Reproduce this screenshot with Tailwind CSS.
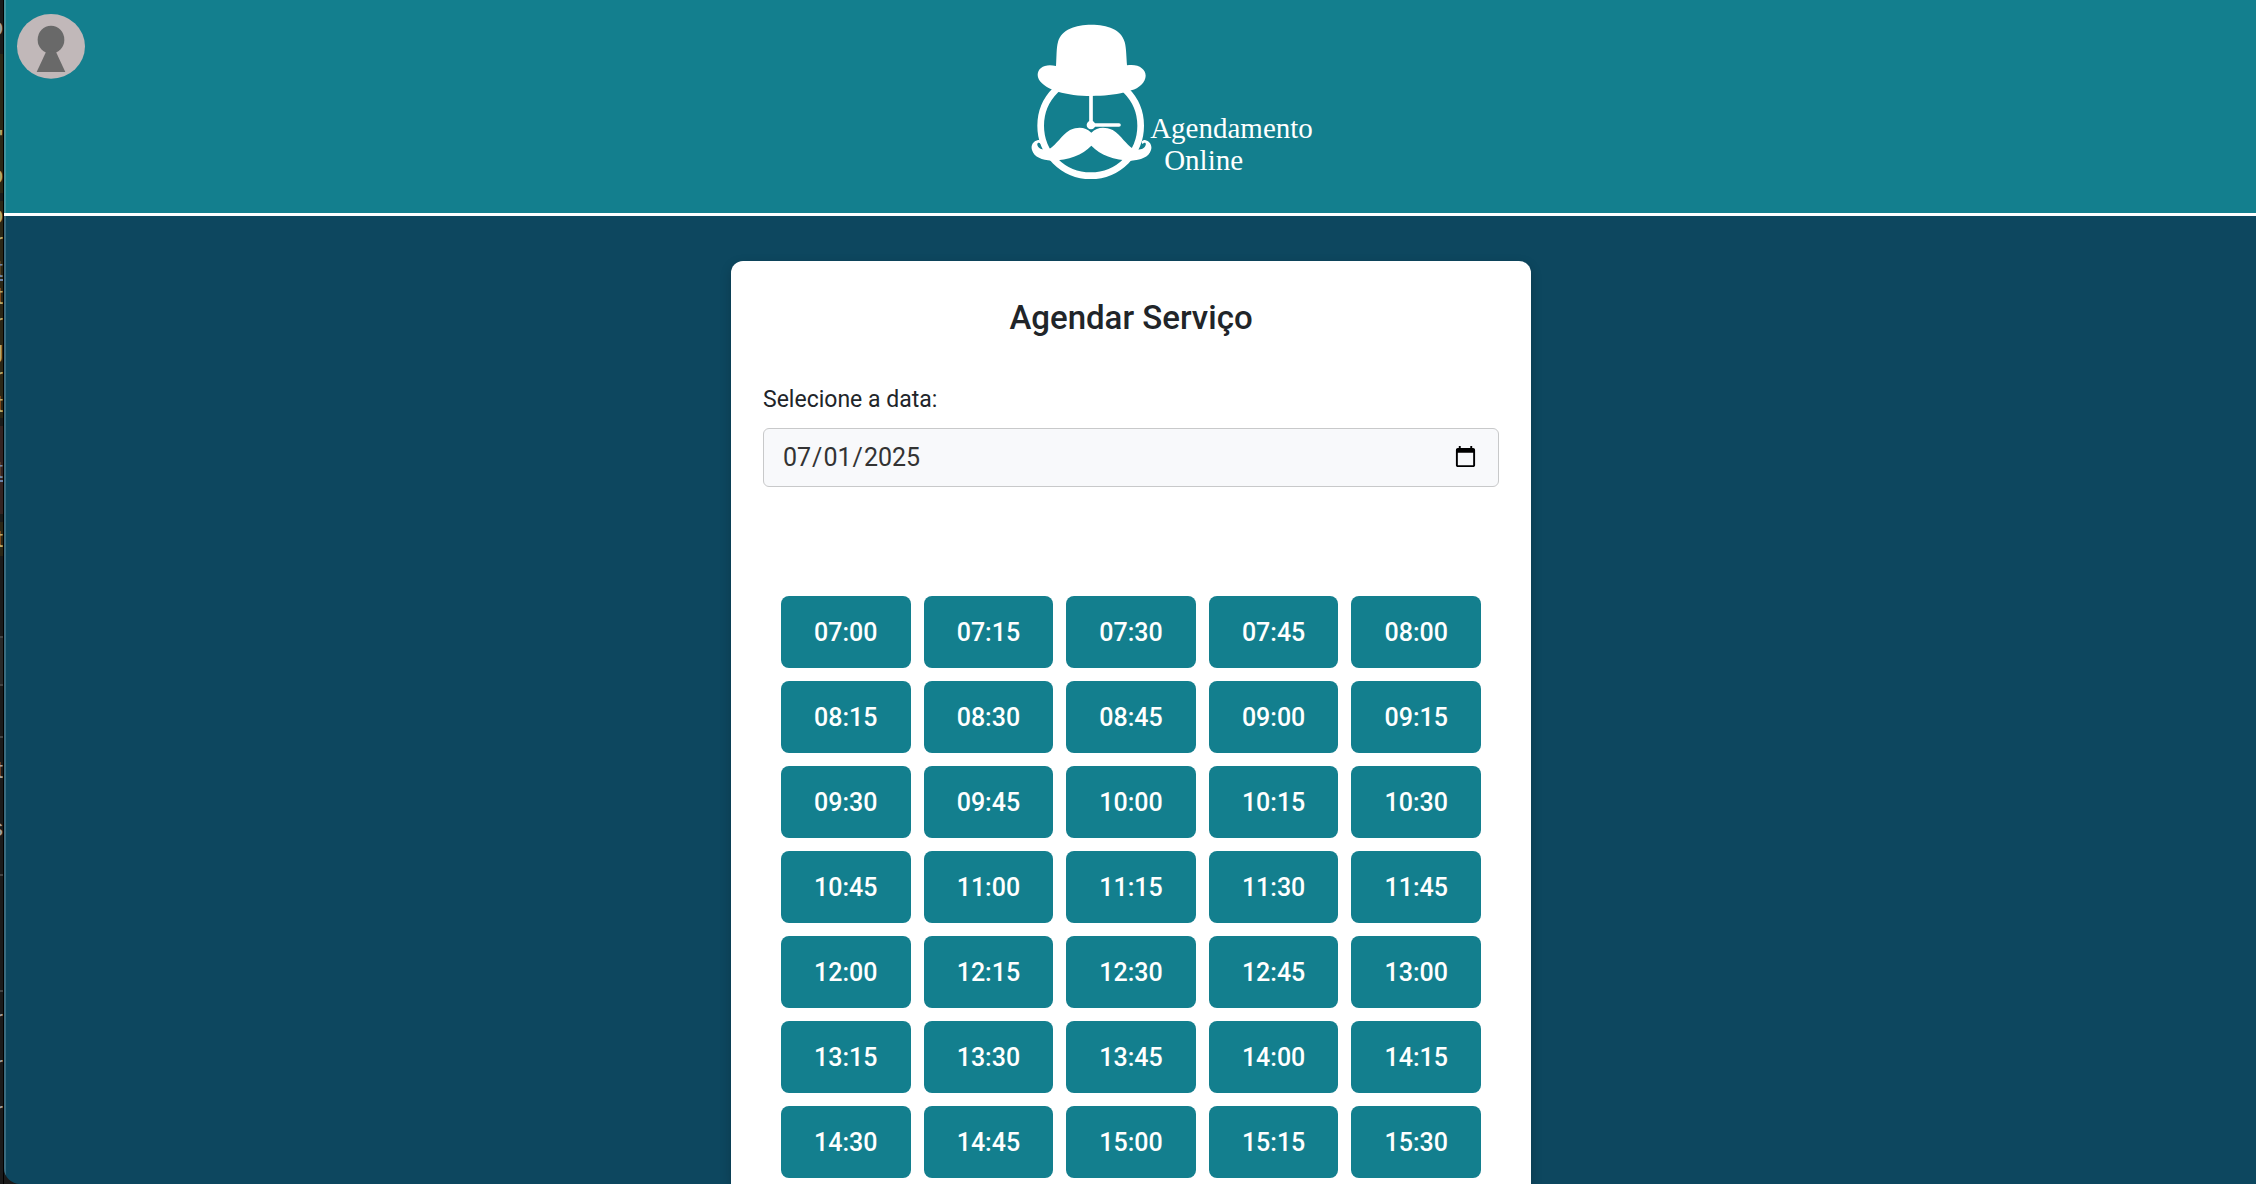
<!DOCTYPE html>
<html lang="pt-BR">
<head>
<meta charset="utf-8">
<title>Agendamento Online</title>
<script src="https://cdn.jsdelivr.net/npm/@tailwindcss/browser@4"></script>
</head>
<body class="flex h-screen overflow-hidden bg-[#1b1b1b] font-['Roboto',sans-serif] text-[#212529]">

<!-- Sliver of the editor window behind the browser -->
<aside aria-hidden="true" class="flex w-1 shrink-0 flex-col overflow-hidden border-r border-black font-['Liberation_Sans',sans-serif] text-2xl text-[#b5a96e]">
  <div class="flex h-[54px] shrink-0 items-center justify-end bg-[#1b1b1b] text-[#a0a0a0]">o</div>
  <div class="flex h-[139px] shrink-0 flex-col items-end justify-end bg-[#2c2716] leading-9"><span>"</span><span>o</span></div>
  <div class="h-2 shrink-0"></div>
  <div class="flex h-[217px] shrink-0 flex-col items-end bg-[#2c2716] leading-[27px]"><span>o</span><span>r</span><span class="text-[#6d83a8] underline">t</span><span>t</span><span>r</span><span>g</span><span>r</span><span>t</span></div>
  <div class="h-2 shrink-0"></div>
  <div class="flex h-[88px] shrink-0 items-center justify-end bg-[#352322] text-[#6d83a8] underline">t</div>
  <div class="h-2 shrink-0"></div>
  <div class="flex h-[34px] shrink-0 items-center justify-end bg-[#2c2716]">t</div>
  <div class="h-20 shrink-0"></div>
  <div class="h-[50px] shrink-0 border-y-2 border-[#444] bg-[#292929]"></div>
  <div class="h-[50px] shrink-0"></div>
  <div class="flex h-[138px] shrink-0 flex-col items-end border-t-2 border-[#444] pt-4 leading-[84px] text-[#a0a0a0]"><span class="leading-8">t</span><span>s</span></div>
  <div class="h-[118px] shrink-0 border-y-2 border-[#444]"></div>
  <div class="flex shrink-0 flex-col items-end pt-1 leading-[46px] text-[#a0a0a0]"><span>r</span><span>r</span><span>r</span></div>
</aside>

<div class="flex min-w-0 flex-1 flex-col overflow-hidden rounded-bl-2xl bg-[#0d475f]">
  <header class="shrink-0 border-b-[3px] border-white bg-[#137f8e]">
    <div class="grid h-[213px] grid-cols-[1fr_auto_1fr] items-start border-l-2 border-[#42949f]">
      <button type="button" aria-label="Perfil" class="mt-3.5 ml-[11px] justify-self-start">
        <svg class="h-[65px] w-[68px]" viewBox="0 0 204 195"><ellipse cx="102" cy="97" rx="102" ry="97" fill="#c1b8b9"/><ellipse cx="102" cy="77" rx="40" ry="42" fill="#696969"/><path d="M88 112h28l29 62H59z" fill="#696969"/></svg>
      </button>
      <a href="#" class="flex items-start pt-6 pl-[82px] text-white">
        <svg class="h-[156px] w-[121px]" viewBox="61 42 363 468" fill="#fff">
          <circle cx="240" cy="347" r="150" fill="none" stroke="#fff" stroke-width="20"/>
          <path d="M136 168C138 140 137 112 142 96C152 58 195 44 242 44C290 44 332 58 342 96C347 114 347 140 349 166C382 160 405 176 405 197C405 216 385 235 362 241L342 247C310 255 280 258 242 258C205 258 170 253 142 245L122 238C100 228 81 212 81 195C81 172 105 160 136 168Z"/>
          <path d="M241 256V345H325" fill="none" stroke="#fff" stroke-width="11" stroke-linecap="round"/>
          <circle cx="241" cy="345" r="13"/>
          <path d="M242 368C225 352 205 348 178 360C150 378 140 402 116 417C100 421 83 418 80 405C79 398 85 396 90 402C97 396 89 388 80 391C66 395 60 408 64 420C70 442 95 450 122 452C175 450 215 435 242 407C269 435 309 450 362 452C389 450 415 442 421 420C425 408 419 395 405 391C396 388 389 396 396 402C401 396 407 398 405 405C402 418 385 421 368 417C344 402 334 378 306 360C279 348 259 352 242 368Z"/>
        </svg>
        <span class="-ml-0.5 pt-[88px] font-['Liberation_Serif',serif] text-[29px] leading-8">Agendamento<br><span class="pl-3.5">Online</span></span>
      </a>
    </div>
  </header>

  <main class="flex flex-1 justify-center border-l-2 border-[#3a6c80] pt-[45px]">
    <section class="w-full max-w-[800px] rounded-t-xl bg-white px-8 shadow-[0_4px_12px_rgba(0,0,0,0.2)]">
      <h1 class="pt-9 text-center text-[33px] leading-[42px] font-medium">Agendar Serviço</h1>
      <form>
        <label for="data" class="mt-[45px] block text-[23px] leading-8">Selecione a data:</label>
        <input id="data" type="date" lang="en-US" value="2025-07-01" class="mt-3 h-[59px] w-full rounded-md border border-[#c8c9ca] bg-[#f8f9fb] px-[18px] text-[25px] text-[#333]">
        <div id="horarios" class="mt-[109px] grid grid-cols-5 gap-[13px] px-[18px]"></div>
      </form>
    </section>
  </main>
</div>

<script>
  const grid = document.getElementById('horarios');
  for (let m = 7 * 60; m <= 15 * 60 + 30; m += 15) {
    const b = document.createElement('button');
    b.type = 'button';
    b.className = 'h-[72px] rounded-lg bg-[#137f8e] pt-0.5 text-[25px] font-medium text-white';
    b.textContent = String(Math.floor(m / 60)).padStart(2, '0') + ':' + String(m % 60).padStart(2, '0');
    grid.append(b);
  }
</script>
</body>
</html>
